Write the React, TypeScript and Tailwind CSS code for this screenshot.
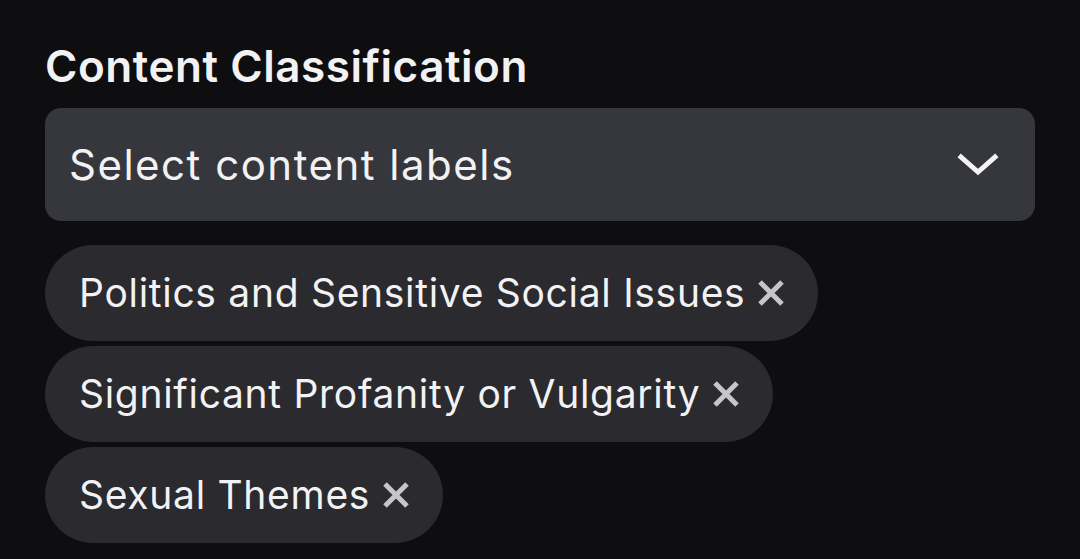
const labels = [
  'Politics and Sensitive Social Issues',
  'Significant Profanity or Vulgarity',
  'Sexual Themes',
];

const XIcon = () => (
  <svg width="28" height="28" viewBox="0 0 28 28" fill="none" stroke="#c6c6c9" strokeWidth="5" strokeLinecap="butt">
    <path d="M3 3 L25 25 M25 3 L3 25" />
  </svg>
);

const Chevron = () => (
  <svg width="42" height="28" viewBox="0 0 42 28" fill="none" stroke="#f4f4f5" strokeWidth="5" strokeLinecap="square">
    <path d="M4 6 L21 21 L38 6" />
  </svg>
);

const App = () => {
  return (
    <div
      className="min-h-screen w-full bg-[#0e0e10] text-[#f2f2f4] px-[45px] pt-[40px]"
      style={{ fontFamily: 'Inter, "Noto Sans", sans-serif' }}
    >
      <h2 className="text-[44px] font-semibold leading-[52px] tracking-[0.55px]">Content Classification</h2>
      <div className="mt-[16px] w-[990px] h-[113px] rounded-[16px] bg-[#36373c] flex items-center justify-between pl-[24px] pr-[36px]">
        <span className="text-[42px] font-normal tracking-[1.5px]">Select content labels</span>
        <Chevron />
      </div>
      <div className="mt-[24px] flex flex-col items-start gap-[5px]">
        {labels.map((l) => (
          <div key={l} className="h-[96px] rounded-full bg-[#2a2a2f] flex items-center pl-[34px] pr-[33px] gap-[12px]">
            <span className="text-[39px] font-normal tracking-[0.7px]">{l}</span>
            <XIcon />
          </div>
        ))}
      </div>
    </div>
  );
};

export default App;
